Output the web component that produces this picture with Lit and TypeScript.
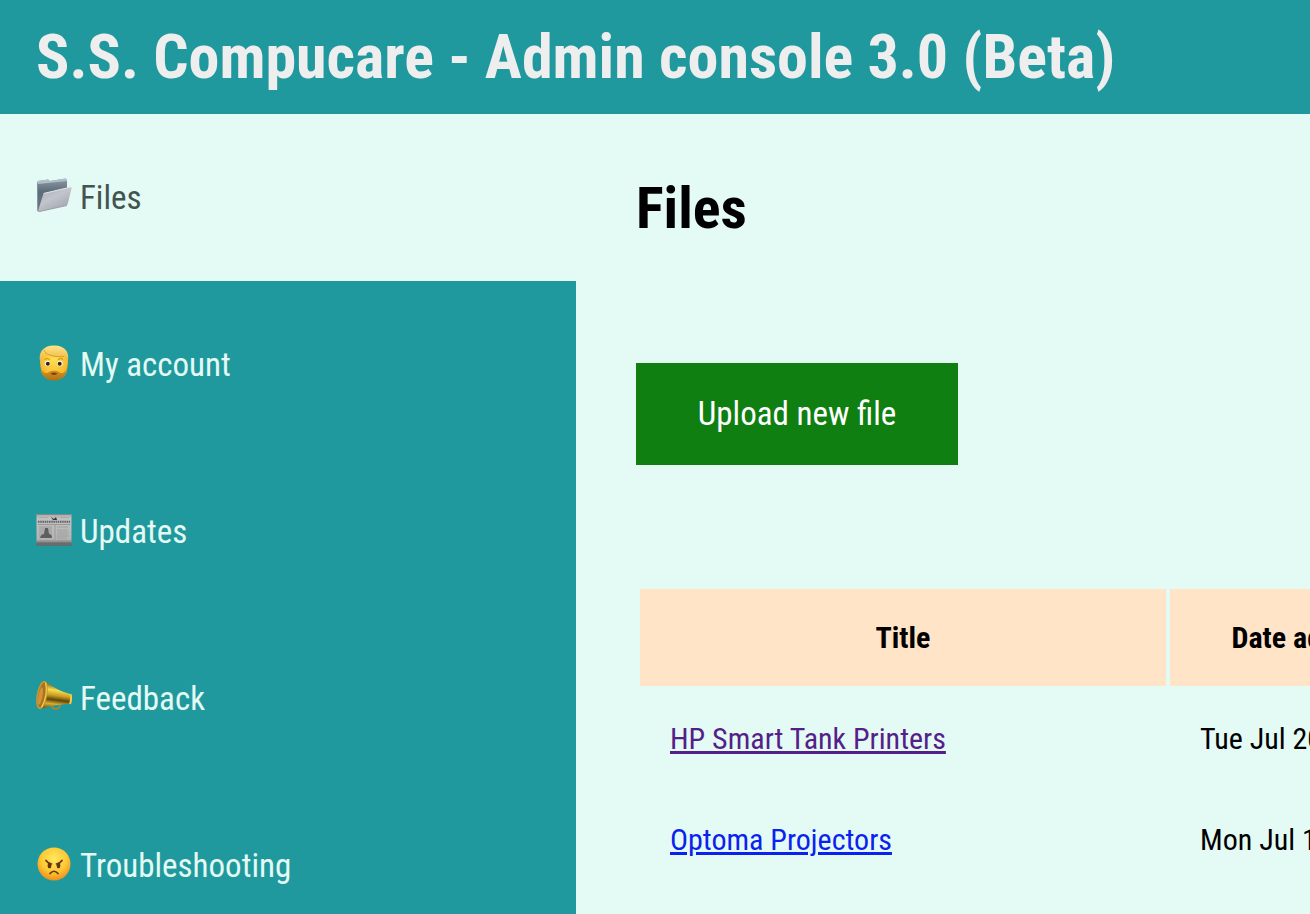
import { LitElement, html, css, svg } from "lit";
import { customElement, state } from "lit/decorators.js";

const icons = {
  files: svg`
    <defs>
      <linearGradient id="back" x1="0" y1="0" x2="0" y2="1"><stop offset="0" stop-color="#8d9ba6"/><stop offset=".4" stop-color="#5b6b78"/><stop offset="1" stop-color="#6d7a87"/></linearGradient>
      <linearGradient id="front" x1="0" y1="0" x2=".7" y2="1"><stop offset="0" stop-color="#a9abb5"/><stop offset=".5" stop-color="#c3c5cc"/><stop offset="1" stop-color="#a2a4ae"/></linearGradient>
    </defs>
    <path d="M1 4.500L2 3l10-1.500 2 1.500L29.500.500 31 2v11L3 33.500 1.500 32z" fill="url(#back)"/>
    <path d="M1 4.500L2 3l10-1.500 2 1.500L29.500.500 31 2v1L2 6z" fill="#b0bfc6"/>
    <path d="M7 17q0-1.500 2-2L34 9q2-.500 1.500 1.500L32 25q-.500 2-2 2.500L4 33.500 2 33z" fill="url(#front)"/>
    <path d="M7.500 15.500L35 9" fill="none" stroke="#e2e4ea"/>
    <path d="M1.500 5v28l2 .500L31 27.500" fill="none" stroke="#8d929c" stroke-width=".8"/>`,
  account: svg`
    <defs>
      <radialGradient id="skin" cx=".5" cy=".4" r=".6"><stop offset="0" stop-color="#ffe04f"/><stop offset="1" stop-color="#f6b125"/></radialGradient>
      <linearGradient id="hair" x1="0" y1="0" x2="0" y2="1"><stop offset="0" stop-color="#ffe48a"/><stop offset="1" stop-color="#eaae33"/></linearGradient>
      <linearGradient id="beard" x1="0" y1="0" x2="0" y2="1"><stop offset="0" stop-color="#e0a02b"/><stop offset="1" stop-color="#b46f10"/></linearGradient>
    </defs>
    <path d="M4 17C4 4 10 1 18 1s15 4 14 16l-1 8c-1 6-6 10-13 10S6 31 5 25z" fill="url(#skin)"/>
    <path d="M5 22c1 4 3 6.500 6.500 6 3-3.500 10-3.500 13 0 3.500.500 5.500-2 6.500-6 .500 8-5 13.500-13 13.500S4.500 30 5 22z" fill="url(#beard)"/>
    <path d="M4.500 18C1.500 8 7 .500 18 .500 29 .500 34.500 7 31.500 18 31 15 30 13 28 11.500 20 13 12 11 9 7.500c1 4-3.500 6-4.500 10.500z" fill="url(#hair)"/>
    <path d="M8 5c1 4 8 7.500 20 6.500" fill="none" stroke="#d2922a" stroke-width=".8"/>
    <ellipse cx="11.500" cy="18.500" rx="2.700" ry="2.800" fill="#fff"/><ellipse cx="24" cy="18.500" rx="2.700" ry="2.800" fill="#fff"/>
    <circle cx="11.800" cy="18.700" r="2" fill="#33251b"/><circle cx="23.700" cy="18.700" r="2" fill="#33251b"/>
    <path d="M8.500 14.500q3-2 5 0m8.500 0q3-2 5 0" fill="none" stroke="#c88a1c"/>
    <path d="M14.500 28.500q3.500-2 7 0-3.500 3-7 0z" fill="#7f450b"/>`,
  updates: svg`
    <defs><linearGradient id="paper" x1="0" y1="0" x2="0" y2="1"><stop offset="0" stop-color="#aaa"/><stop offset=".15" stop-color="#c1c1c1"/><stop offset=".8" stop-color="#b4b4b4"/><stop offset="1" stop-color="#585858"/></linearGradient></defs>
    <path d="M.500 2H35.500V33.500H.500z" fill="url(#paper)"/>
    <path d="M.500 2.500h35" stroke="#888"/>
    <path d="M3 5.500h9m12 0h9" stroke="#aaa"/><path d="M15 5l3 2 2-2 1 3h-4z" fill="#333"/>
    <path d="M2 9.800h32" stroke="#606060" stroke-width="2" stroke-dasharray="1.500 .700"/>
    <path d="M2 12.500h32M19 13v17" stroke="#999"/>
    <path d="M3 14h13v12H3z" fill="#aaa"/><path d="M4 26q1-4 4-4l1-6h3l1 6q3 0 3 4z" fill="#5e5e5e"/>
    <path d="M21 15h11m-11 3h11m-11 2h12m-12 2h11m-11 2h12m-12 2h10M3 28.500h13m5 0h12" stroke="#999" stroke-width=".8"/>
    <path d="M.500 30.500h35v3h-35z" fill="#6c6c6c"/>`,
  feedback: svg`
    <defs><linearGradient id="horn" x1=".45" y1="0" x2=".3" y2="1"><stop offset=".12" stop-color="#a37a1b"/><stop offset=".3" stop-color="#f8dc4c"/><stop offset=".5" stop-color="#c99c22"/><stop offset=".66" stop-color="#5e450d"/><stop offset=".82" stop-color="#d9af2d"/><stop offset="1" stop-color="#7c570f"/></linearGradient></defs>
    <path d="M15 26q2 4.500 5 4 4-.500 4.500-5.500" fill="none" stroke="#ba8723" stroke-width="1.600"/>
    <path d="M10 3Q22 12 34 15q2 5 0 10Q20 25 6 29.500z" fill="url(#horn)"/>
    <ellipse cx="6" cy="16" rx="4.500" ry="13.500" transform="rotate(10 6 16)" fill="#a87422" stroke="#c99a30" stroke-width="1.500"/>
    <ellipse cx="4.500" cy="17" rx="2" ry="9" transform="rotate(10 4.500 17)" fill="#d3913a"/>
    <path d="M9.500 3.500q3 11-4 25" fill="none" stroke="#f0ce4a" stroke-width="1.200"/>
    <path d="M34.500 15q1.500 4.500-.500 10" fill="none" stroke="#efcc4d" stroke-width="2"/>`,
  troubleshooting: svg`
    <defs><radialGradient id="angry" cx=".5" cy=".35" r=".65"><stop offset="0" stop-color="#ffe85d"/><stop offset=".6" stop-color="#fdc935"/><stop offset="1" stop-color="#ee8e1c"/></radialGradient></defs>
    <circle cx="18" cy="18" r="16.500" fill="url(#angry)"/>
    <ellipse cx="13.500" cy="19.500" rx="1.900" ry="2.700" fill="#663510"/><ellipse cx="22.500" cy="19.500" rx="1.900" ry="2.700" fill="#663510"/>
    <path d="M10 14.500q2 3 5.500 3.500m10.500-3.500q-2 3-5.500 3.500M14 27.500q4-4.500 8 0" fill="none" stroke="#663510" stroke-width="1.700" stroke-linecap="round"/>`,
};

type Section = keyof typeof icons;

const sections: { id: Section; label: string }[] = [
  { id: "files", label: "Files" },
  { id: "account", label: "My account" },
  { id: "updates", label: "Updates" },
  { id: "feedback", label: "Feedback" },
  { id: "troubleshooting", label: "Troubleshooting" },
];

const files = [
  { title: "HP Smart Tank Printers", date: "Tue Jul 20 2021", visited: true },
  { title: "Optoma Projectors", date: "Mon Jul 19 2021", visited: false },
];

@customElement("app-root")
export class AppRoot extends LitElement {
  @state() private current: Section = "files";

  static styles = css`
    :host {
      display: flex;
      flex-direction: column;
      height: 100vh;
      overflow: hidden;
      background: #e4faf4;
      color: #000;
      font-family: "Roboto Condensed", "Arial Narrow", "Liberation Sans", sans-serif;
      font-size: 33px;
    }
    .header {
      flex: none;
      padding: 20px 36px;
      background: #20999e;
      color: #eee;
    }
    .brand {
      margin: 0;
      font-size: 62px;
      line-height: 74px;
      white-space: nowrap;
    }
    .body {
      display: flex;
      flex: 1;
      min-height: 0;
    }
    .nav {
      flex: none;
      width: 576px;
      background: #20999e;
    }
    .item {
      display: flex;
      align-items: center;
      gap: 8px;
      padding: 63px 36px;
      line-height: 41px;
      color: #e4faf4;
      text-decoration: none;
    }
    .item.active {
      background: #e4faf4;
      color: #43534f;
    }
    .icon {
      flex: none;
      width: 36px;
      height: 36px;
      margin-bottom: 4px;
    }
    .main {
      flex: 1;
      min-width: 0;
      overflow: hidden;
      padding: 60px;
    }
    .heading {
      margin: 0;
      font-size: 58px;
      line-height: 69px;
    }
    .upload {
      display: block;
      min-width: 322px;
      margin: 120px 0;
      padding: 30px 58px;
      border: 0;
      background: #107f11;
      color: #fff;
      font: inherit;
      line-height: 42px;
      white-space: nowrap;
    }
    .files {
      border-collapse: separate;
      border-spacing: 4px;
      font-size: 30px;
      line-height: 37px;
      white-space: nowrap;
    }
    .files th,
    .files td {
      padding: 30px;
      text-align: left;
    }
    .files th {
      background: #ffe4c7;
      text-align: center;
    }
    .files .title {
      min-width: 466px;
    }
    .link {
      color: #0b21f0;
      text-decoration-thickness: 3px;
    }
    .link.visited {
      color: #551f8a;
    }
  `;

  render() {
    return html`
      <header class="header"><h1 class="brand">S.S. Compucare - Admin console 3.0 (Beta)</h1></header>
      <div class="body">
        <nav class="nav">
          ${sections.map(
            (s) => html`<a
              class="item ${s.id === this.current ? "active" : ""}"
              href="#${s.id}"
              @click=${() => (this.current = s.id)}
            ><svg class="icon" viewBox="0 0 36 36" aria-hidden="true">${icons[s.id]}</svg><span>${s.label}</span></a>`
          )}
        </nav>
        <main class="main">
          <h2 class="heading">Files</h2>
          <button class="upload" type="button">Upload new file</button>
          <table class="files">
            <thead>
              <tr><th class="title" scope="col">Title</th><th scope="col">Date added</th></tr>
            </thead>
            <tbody>
              ${files.map(
                (f) => html`<tr>
                  <td><a class="link ${f.visited ? "visited" : ""}" href="#file">${f.title}</a></td>
                  <td>${f.date}</td>
                </tr>`
              )}
            </tbody>
          </table>
        </main>
      </div>
    `;
  }
}
